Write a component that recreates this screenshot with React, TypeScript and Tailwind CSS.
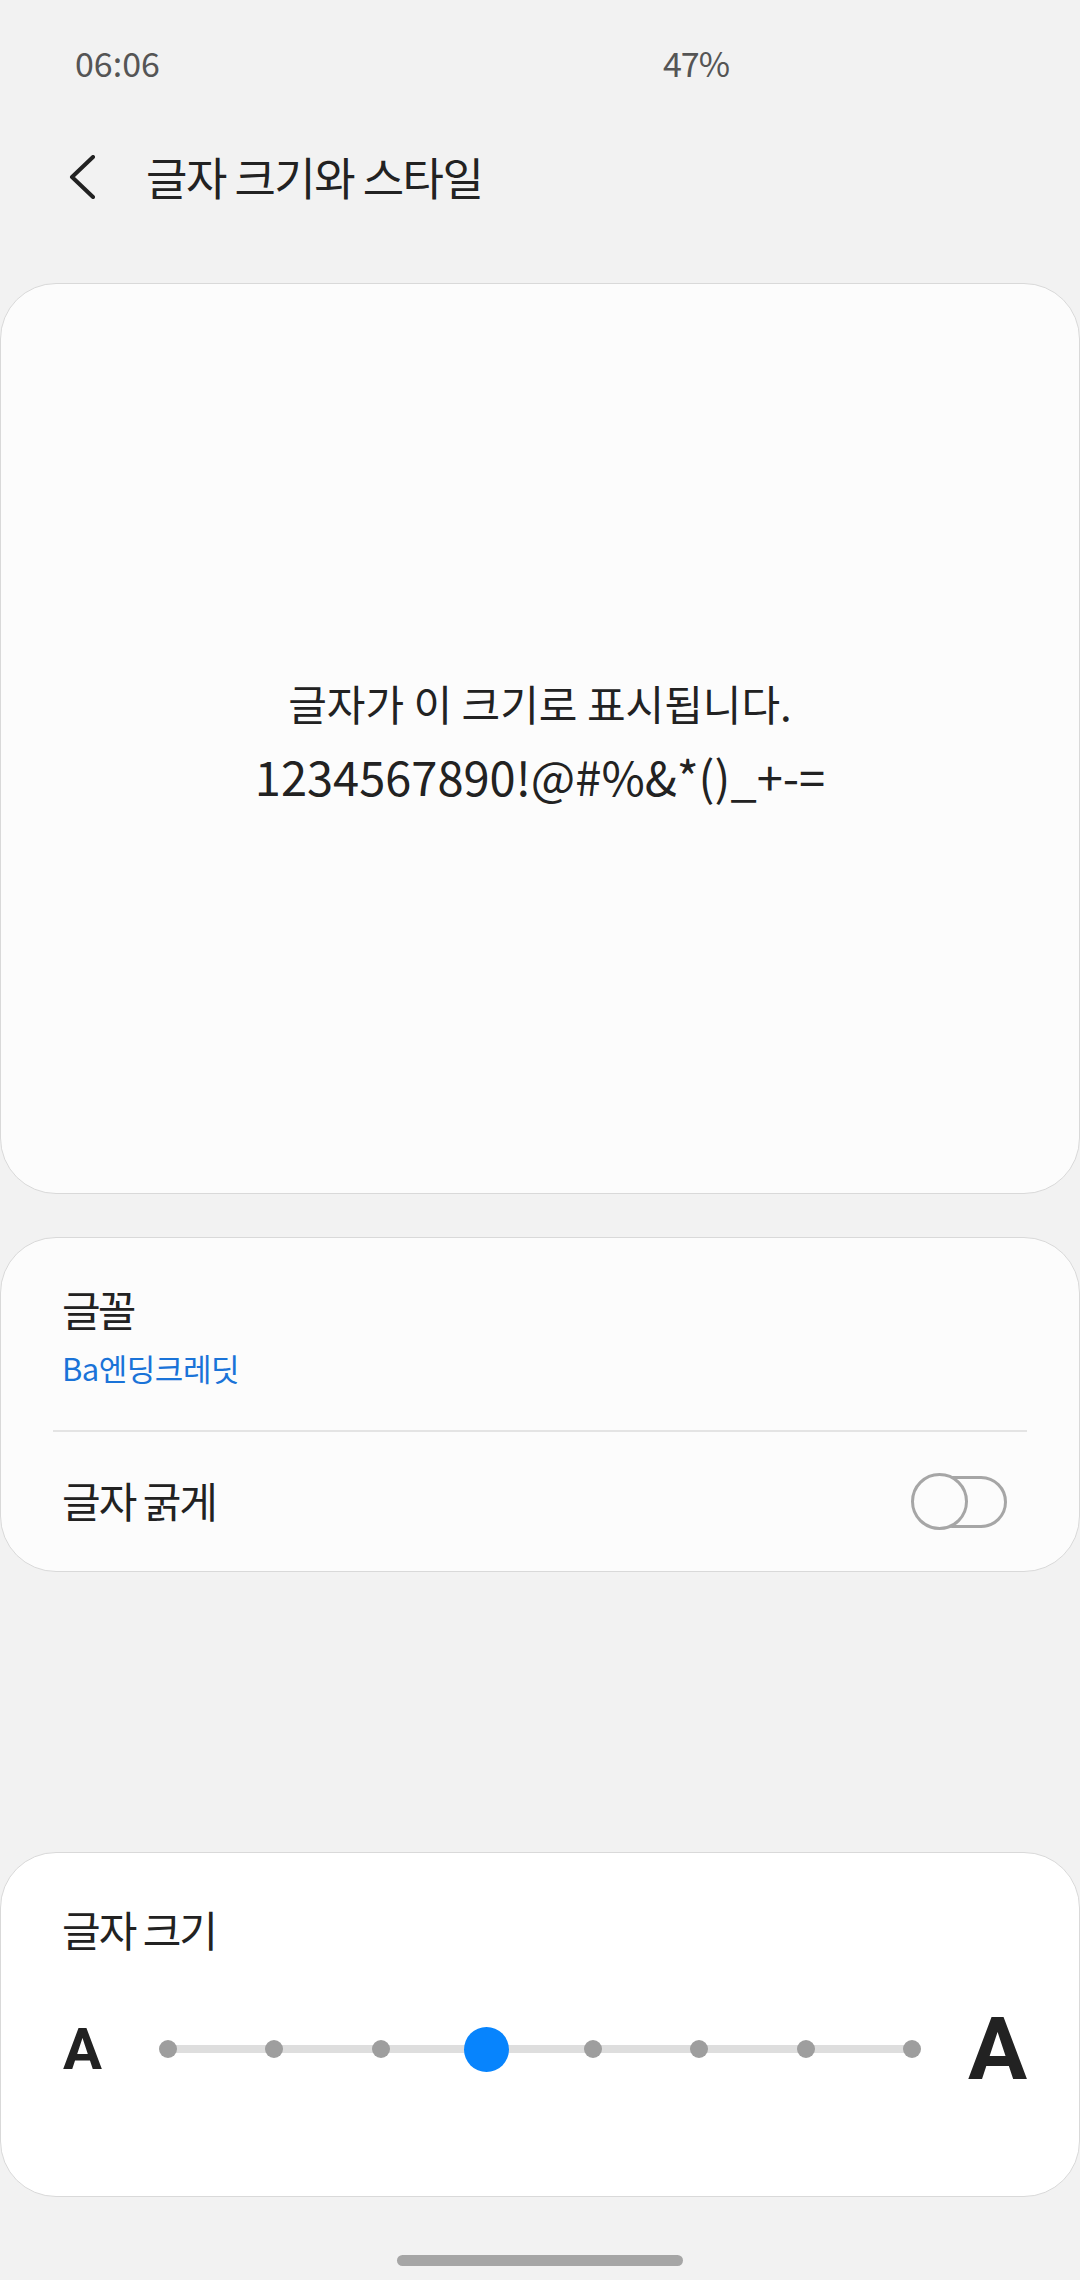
import React from "react";

const KR = { fontFamily: '"Noto Sans CJK KR", "Noto Sans", sans-serif' };

export default function App() {
  const dots = [0, 1, 2, 3, 4, 5, 6, 7];
  return (
    <div className="w-[1080px] h-[2280px] bg-[#f2f2f2] flex flex-col overflow-hidden" style={KR}>
      {/* status bar */}
      <div className="h-[127px] flex items-start pl-[75px] pt-[38px] text-[#555555] text-[34px] leading-[50px]">
        <span className="w-[588px]">06:06</span>
        <span className="tracking-[-1px]">47%</span>
      </div>

      {/* header */}
      <div className="h-[100px] flex items-center">
        <svg className="ml-[68px]" width="28" height="44" viewBox="0 0 28 44" fill="none">
          <polyline points="25,2 4,22 25,42" stroke="#222222" strokeWidth="4" strokeLinecap="round" strokeLinejoin="round" />
        </svg>
        <span className="ml-[50px] text-[45px] leading-[60px] tracking-[-1.5px] text-[#222222]">글자 크기와 스타일</span>
      </div>

      {/* preview card */}
      <div className="mt-[56px] h-[911px] bg-[#fcfcfc] border border-[#d9d9d9] rounded-[56px] flex flex-col items-center justify-center text-[#222222]">
        <div className="text-[42px] leading-[73px] tracking-[0px]">글자가 이 크기로 표시됩니다.</div>
        <div className="text-[47px] leading-[73px] tracking-[0px]">1234567890!@#%&amp;*()_+-=</div>
      </div>

      {/* font card */}
      <div className="mt-[43px] h-[335px] bg-[#fcfcfc] border border-[#d9d9d9] rounded-[56px] flex flex-col">
        <div className="pl-[61px] pt-[46px] pb-[42px] flex flex-col">
          <span className="text-[42px] leading-[50px] tracking-[-3px] text-[#222222]">글꼴</span>
          <span className="mt-[14px] text-[31px] leading-[40px] tracking-[-0.5px] text-[#1a73d8]">Ba엔딩크레딧</span>
        </div>
        <div className="mx-[52px] h-[2px] bg-[#e4e4e4]" />
        <div className="flex-1 flex items-center pl-[61px] pr-[72px]">
          <span className="text-[42px] leading-[50px] tracking-[-2px] text-[#222222] -mt-[4px]">글자 굵게</span>
          <div className="ml-auto relative w-[96px] h-[58px]">
            <div className="absolute right-0 top-[3px] w-[80px] h-[52px] rounded-full border-[3px] border-[#a6a6a6] bg-[#fcfcfc]" />
            <div className="absolute left-0 top-0 w-[57px] h-[57px] rounded-full border-[3px] border-[#a6a6a6] bg-[#fcfcfc]" />
          </div>
        </div>
      </div>

      {/* size card */}
      <div className="mt-[280px] h-[345px] bg-white border border-[#d9d9d9] rounded-[56px] flex flex-col">
        <span className="pl-[61px] pt-[51px] text-[42px] leading-[50px] tracking-[-2px] text-[#222222]">글자 크기</span>
        <div className="mt-[63px] h-[64px] flex items-center pl-[62px] pr-[52px]">
          <span className="text-[58px] leading-[64px] font-bold text-[#222222] w-[96px]" style={{ fontFamily: 'Roboto, "Noto Sans", sans-serif' }}>A</span>
          <div className="relative w-[762px] h-[64px] flex items-center justify-between">
            <div className="absolute left-[9px] right-[9px] top-[28px] h-[8px] bg-[#dedede]" />
            {dots.map((i) => (
              <div key={i} className="relative w-[18px] h-[18px] flex items-center justify-center">
                {i === 3 ? (
                  <div className="absolute w-[45px] h-[45px] rounded-full bg-[#0784fd]" />
                ) : (
                  <div className="w-[18px] h-[18px] rounded-full bg-[#9e9e9e]" />
                )}
              </div>
            ))}
          </div>
          <span className="ml-auto text-[88px] leading-[64px] font-bold text-[#222222]" style={{ fontFamily: 'Roboto, "Noto Sans", sans-serif' }}>A</span>
        </div>
      </div>

      {/* home bar */}
      <div className="mt-[58px] flex justify-center">
        <div className="w-[286px] h-[11px] rounded-full bg-[#a6a6a6]" />
      </div>
    </div>
  );
}
